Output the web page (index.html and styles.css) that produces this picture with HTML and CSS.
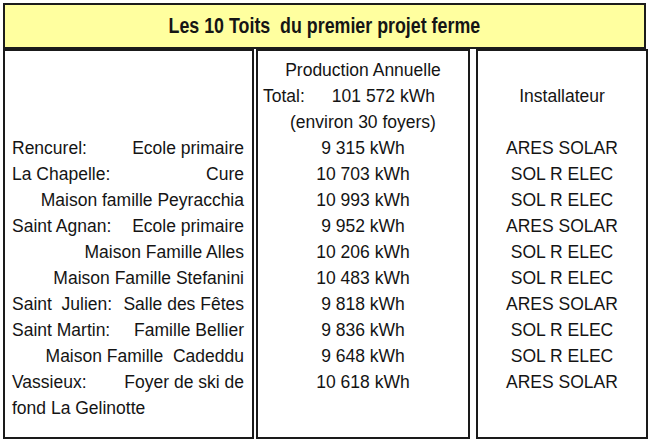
FILE: index.html
```html
<!DOCTYPE html>
<html lang="fr">
<head>
<meta charset="utf-8">
<title>Les 10 Toits</title>
<link rel="stylesheet" href="styles.css">
</head>
<body>
<div class="page">
  <div class="title"><span class="title-text">Les 10 Toits&nbsp; du premier projet ferme</span></div>
  <div class="cols">
    <div class="col col-sites">
      <div class="row"></div>
      <div class="row"></div>
      <div class="row"></div>
      <div class="row split"><span>Rencurel:</span><span>Ecole primaire</span></div>
      <div class="row split"><span>La Chapelle:</span><span>Cure</span></div>
      <div class="row right">Maison famille Peyracchia</div>
      <div class="row split"><span>Saint Agnan:</span><span>Ecole primaire</span></div>
      <div class="row right">Maison Famille Alles</div>
      <div class="row right">Maison Famille Stefanini</div>
      <div class="row split"><span>Saint&nbsp; Julien:</span><span>Salle des Fêtes</span></div>
      <div class="row split"><span>Saint Martin:</span><span>Famille Bellier</span></div>
      <div class="row right">Maison Famille&nbsp; Cadeddu</div>
      <div class="row split"><span>Vassieux:</span><span>Foyer de ski de</span></div>
      <div class="row">fond La Gelinotte</div>
    </div>
    <div class="col col-prod">
      <div class="row center">Production Annuelle</div>
      <div class="row total"><span>Total:</span><span class="total-val">101 572 kWh</span></div>
      <div class="row center">(environ 30 foyers)</div>
      <div class="row center">9 315 kWh</div>
      <div class="row center">10 703 kWh</div>
      <div class="row center">10 993 kWh</div>
      <div class="row center">9 952 kWh</div>
      <div class="row center">10 206 kWh</div>
      <div class="row center">10 483 kWh</div>
      <div class="row center">9 818 kWh</div>
      <div class="row center">9 836 kWh</div>
      <div class="row center">9 648 kWh</div>
      <div class="row center">10 618 kWh</div>
    </div>
    <div class="col col-inst">
      <div class="row"></div>
      <div class="row center">Installateur</div>
      <div class="row"></div>
      <div class="row center">ARES SOLAR</div>
      <div class="row center">SOL R ELEC</div>
      <div class="row center">SOL R ELEC</div>
      <div class="row center">ARES SOLAR</div>
      <div class="row center">SOL R ELEC</div>
      <div class="row center">SOL R ELEC</div>
      <div class="row center">ARES SOLAR</div>
      <div class="row center">SOL R ELEC</div>
      <div class="row center">SOL R ELEC</div>
      <div class="row center">ARES SOLAR</div>
    </div>
  </div>
</div>
</body>
</html>
```
FILE: styles.css
```css
html, body {
  margin: 0;
  padding: 0;
  background: #ffffff;
}
body {
  font-family: "Liberation Sans", Arial, sans-serif;
  color: #141414;
}
.page {
  width: 645px;
  margin: 3px 0 0 3px;
}
.title {
  box-sizing: border-box;
  width: 643px;
  height: 46px;
  border: 2px solid #1c1c1c;
  background: #ffff9f;
  display: flex;
  align-items: center;
  justify-content: center;
}
.title-text {
  display: inline-block;
  font-weight: bold;
  font-size: 22px;
  color: #151515;
  transform: scaleX(0.81);
  white-space: nowrap;
  margin-top: -1px;
}
.cols {
  display: flex;
  height: 390px;
  margin-top: 0;
}
.col {
  box-sizing: border-box;
  height: 100%;
  border: 2px solid #1a1a1a;
  padding-top: 6px;
  font-size: 17.5px;
}
.col-sites {
  width: 251px;
  padding-left: 7px;
  padding-right: 8px;
}
.col-prod {
  width: 214px;
  margin-left: 2px;
  padding-left: 5px;
}
.col-inst {
  width: 172px;
  margin-left: 6px;
}
.row {
  height: 26px;
  line-height: 26px;
  white-space: nowrap;
}
.split {
  display: flex;
  justify-content: space-between;
}
.right {
  text-align: right;
}
.center {
  text-align: center;
}
.col-prod .center {
  margin-left: -5px;
}
.total-val {
  margin-left: 27px;
}
```
